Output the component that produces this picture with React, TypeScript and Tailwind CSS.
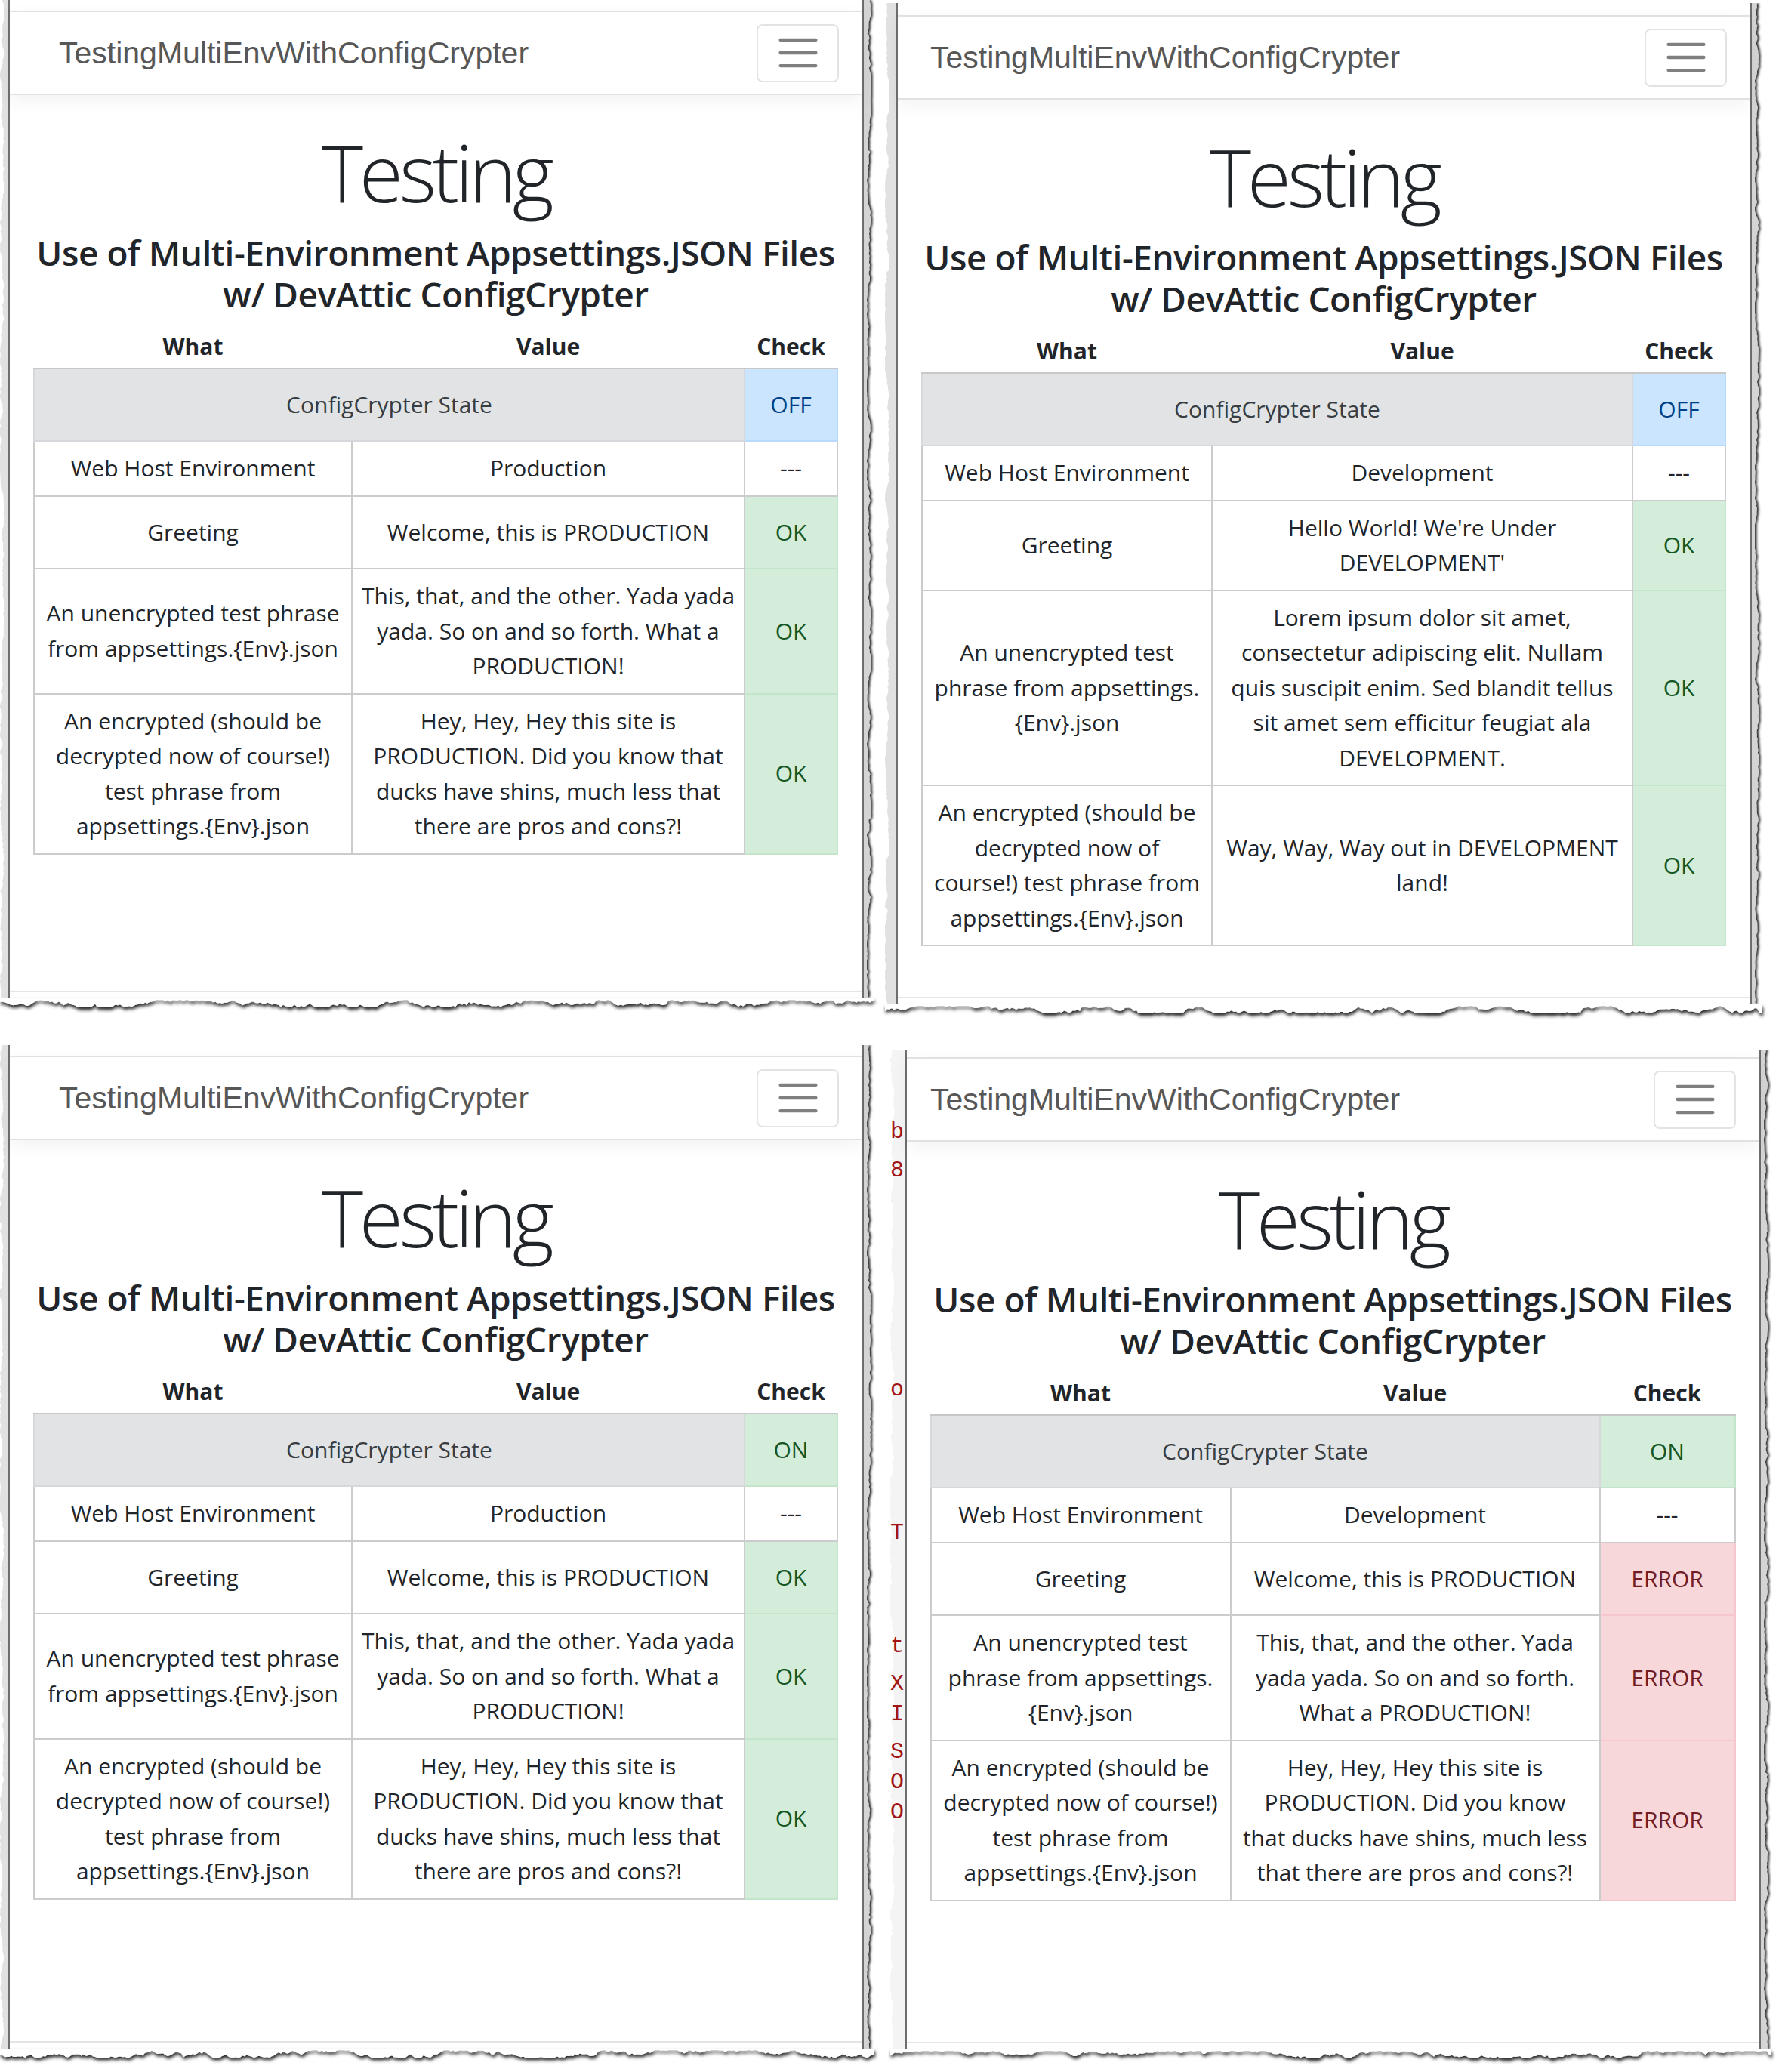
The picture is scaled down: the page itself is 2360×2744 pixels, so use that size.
import React from 'react';
import clsx from 'clsx';

type Check = 'OK' | 'ERROR' | '---';

interface Row {
  what: string[];
  value: string[];
  check: Check;
}

interface Shot {
  id: string;
  state: 'ON' | 'OFF';
  rows: Row[];
  cols: [string, string, string];
  brandPad: string;
  topPad: string;
  height: number;
  heightClass: string;
  wrap: string;
  leftW: number;
  seed: number;
  letters?: boolean;
}

const prodRows: Row[] = [
  { what: ['Web Host Environment'], value: ['Production'], check: '---' },
  { what: ['Greeting'], value: ['Welcome, this is PRODUCTION'], check: 'OK' },
  {
    what: ['An unencrypted test phrase', 'from appsettings.{Env}.json'],
    value: ['This, that, and the other. Yada yada', 'yada. So on and so forth. What a', 'PRODUCTION!'],
    check: 'OK',
  },
  {
    what: ['An encrypted (should be', 'decrypted now of course!)', 'test phrase from', 'appsettings.{Env}.json'],
    value: ['Hey, Hey, Hey this site is', 'PRODUCTION. Did you know that', 'ducks have shins, much less that', 'there are pros and cons?!'],
    check: 'OK',
  },
];

const devRows: Row[] = [
  { what: ['Web Host Environment'], value: ['Development'], check: '---' },
  { what: ['Greeting'], value: ["Hello World! We're Under", "DEVELOPMENT'"], check: 'OK' },
  {
    what: ['An unencrypted test', 'phrase from appsettings.', '{Env}.json'],
    value: [
      'Lorem ipsum dolor sit amet,',
      'consectetur adipiscing elit. Nullam',
      'quis suscipit enim. Sed blandit tellus',
      'sit amet sem efficitur feugiat ala',
      'DEVELOPMENT.',
    ],
    check: 'OK',
  },
  {
    what: ['An encrypted (should be', 'decrypted now of', 'course!) test phrase from', 'appsettings.{Env}.json'],
    value: ['Way, Way, Way out in DEVELOPMENT', 'land!'],
    check: 'OK',
  },
];

// dev host but the encrypted file still says production -> everything fails
const mixedRows: Row[] = [
  { what: ['Web Host Environment'], value: ['Development'], check: '---' },
  { what: ['Greeting'], value: ['Welcome, this is PRODUCTION'], check: 'ERROR' },
  {
    what: ['An unencrypted test', 'phrase from appsettings.', '{Env}.json'],
    value: ['This, that, and the other. Yada', 'yada yada. So on and so forth.', 'What a PRODUCTION!'],
    check: 'ERROR',
  },
  {
    what: ['An encrypted (should be', 'decrypted now of course!)', 'test phrase from', 'appsettings.{Env}.json'],
    value: ['Hey, Hey, Hey this site is', 'PRODUCTION. Did you know', 'that ducks have shins, much less', 'that there are pros and cons?!'],
    check: 'ERROR',
  },
];

const shots: Shot[] = [
  {
    id: 'a',
    state: 'OFF',
    rows: prodRows,
    cols: ['w-[421px]', 'w-[520px]', 'w-[123px]'],
    brandPad: 'pl-[65px]',
    topPad: 'h-[14px]',
    height: 1322,
    heightClass: 'h-[1322px]',
    wrap: '',
    leftW: 10,
    seed: 11,
  },
  {
    id: 'b',
    state: 'OFF',
    rows: devRows,
    cols: ['w-[384px]', 'w-[557px]', 'w-[123px]'],
    brandPad: 'pl-[43px]',
    topPad: 'h-[16px]',
    height: 1326,
    heightClass: 'h-[1326px]',
    wrap: 'mt-[4px] ml-[14px]',
    leftW: 14,
    seed: 23,
  },
  {
    id: 'c',
    state: 'ON',
    rows: prodRows,
    cols: ['w-[421px]', 'w-[520px]', 'w-[123px]'],
    brandPad: 'pl-[65px]',
    topPad: 'h-[14px]',
    height: 1329,
    heightClass: 'h-[1329px]',
    wrap: '',
    leftW: 10,
    seed: 37,
  },
  {
    id: 'd',
    state: 'ON',
    rows: mixedRows,
    cols: ['w-[397px]', 'w-[489px]', 'w-[179px]'],
    brandPad: 'pl-[31px]',
    topPad: 'h-[10px]',
    height: 1324,
    heightClass: 'h-[1324px]',
    wrap: 'mt-[6px] ml-[21px]',
    leftW: 19,
    seed: 53,
    letters: true,
  },
];

const tone = {
  primary: 'bg-[#cce5ff] text-[#004085] border-[#b8daff]',
  success: 'bg-[#d4edda] text-[#155724] border-[#c3e6cb]',
  danger: 'bg-[#f8d7da] text-[#721c24] border-[#f5c6cb]',
};

function rand(seed: number) {
  let s = seed * 7919 + 17;
  return () => {
    s = (s * 16807) % 2147483647;
    return (s - 1) / 2147483646;
  };
}

// random walk for the torn paper edges
function jagged(length: number, min: number, max: number, seed: number) {
  const r = rand(seed);
  const pts: Array<[number, number]> = [];
  let v = (min + max) / 2;
  for (let t = 0; t <= length + 3; t += 3) {
    v += (r() - 0.5) * (max - min) * 0.5;
    if (r() < 0.06) v += (r() - 0.5) * (max - min);
    v = Math.max(min, Math.min(max, v));
    pts.push([Math.min(t, length), v]);
  }
  return pts;
}

function LeftStrip({ width, height, seed, letters }: { width: number; height: number; seed: number; letters?: boolean }) {
  const pts = jagged(height, 0, 5, seed);
  const d = `M${width} 0 L${width} ${height} ` + pts.reverse().map(([t, v]) => `L${v.toFixed(1)} ${t}`).join(' ') + ' Z';
  return (
    <div className="relative self-stretch">
      <svg className="absolute inset-0 block h-full" width={width} viewBox={`0 0 ${width} ${height}`} preserveAspectRatio="none">
        <path d={d} fill={letters ? '#f4f4f4' : '#e1e1e1'} />
      </svg>
      <div className="relative flex flex-col font-['Liberation_Mono',monospace] text-[30px] leading-[30px] text-[#a31515]" style={{ width }}>
        {letters && (
          <>
            <span className="mt-[94px]">b</span>
            <span className="mt-[21px]">8</span>
            <span className="mt-[260px]">o</span>
            <span className="mt-[160px]">T</span>
            <span className="mt-[120px]">t</span>
            <span className="mt-[20px]">X</span>
            <span className="mt-[10px]">I</span>
            <span className="mt-[20px]">S</span>
            <span className="mt-[10px]">O</span>
            <span className="mt-[10px]">O</span>
          </>
        )}
      </div>
    </div>
  );
}

function RightStrip({ height, seed, id }: { height: number; seed: number; id: string }) {
  const pts = jagged(height, 4, 9, seed + 3);
  const d = 'M0 0 ' + pts.map(([t, v]) => `L${v.toFixed(1)} ${t}`).join(' ') + ` L0 ${height} Z`;
  return (
    <svg className="block self-stretch overflow-visible" width="14" viewBox={`0 0 14 ${height}`} preserveAspectRatio="none">
      <defs>
        <filter id={`rs-${id}`} x="-50%" y="0" width="250%" height="100%">
          <feDropShadow dx="2.5" dy="0" stdDeviation="1.5" floodColor="#000" floodOpacity="0.85" />
        </filter>
      </defs>
      <path d={d} fill="#d4d4d4" filter={`url(#rs-${id})`} />
    </svg>
  );
}

function TornBottom({ width, seed, id }: { width: number; seed: number; id: string }) {
  const pts = jagged(width, 2, 12, seed + 7);
  const d = `M0 0 L${width} 0 ` + pts.reverse().map(([t, v]) => `L${t} ${v.toFixed(1)}`).join(' ') + ' Z';
  return (
    <svg className="block overflow-visible" width={width} height="24" viewBox={`0 0 ${width} 24`}>
      <defs>
        <filter id={`tb-${id}`} x="-2%" y="-50%" width="104%" height="300%">
          <feDropShadow dx="1" dy="3.5" stdDeviation="2" floodColor="#000" floodOpacity="0.85" />
        </filter>
      </defs>
      <path d={d} fill="#ffffff" filter={`url(#tb-${id})`} />
    </svg>
  );
}

function Navbar({ brandPad }: { brandPad: string }) {
  return (
    <nav className="relative flex h-[112px] items-center justify-between border-y-2 border-[#dfe1e4] pr-[30px] shadow-[0_8px_22px_rgba(0,0,0,0.05)]">
      <span className={clsx("font-['Liberation_Sans',Arial,sans-serif] text-[41px] leading-none text-[#575757]", brandPad)}>
        TestingMultiEnvWithConfigCrypter
      </span>
      <button
        type="button"
        className="flex h-[77px] w-[109px] items-center justify-center rounded-[8px] border-2 border-[#e3e3e3]"
      >
        <svg width="64" height="64" viewBox="0 0 30 30">
          <path
            d="M4 7h22M4 15h22M4 23h22"
            stroke="rgba(0,0,0,0.5)"
            strokeWidth="2"
            strokeLinecap="round"
            strokeMiterlimit="10"
          />
        </svg>
      </button>
    </nav>
  );
}

function CheckTable({ shot }: { shot: Shot }) {
  const stateTone = shot.state === 'ON' ? tone.success : tone.primary;
  return (
    <table className="mx-auto mt-[19px] w-[1064px] table-fixed border-collapse text-center text-[30px] leading-[46.5px] text-[#212529]">
      <colgroup>
        <col className={shot.cols[0]} />
        <col className={shot.cols[1]} />
        <col className={shot.cols[2]} />
      </colgroup>
      <thead>
        <tr className="font-bold">
          <th className="border-b-2 border-[#c8c8c8] pb-[4px]">What</th>
          <th className="border-b-2 border-[#c8c8c8] pb-[4px]">Value</th>
          <th className="border-b-2 border-[#c8c8c8] pb-[4px]">Check</th>
        </tr>
      </thead>
      <tbody>
        <tr>
          <td colSpan={2} className="border-2 border-[#d6d8db] bg-[#e2e3e5] py-[24px] text-[#383d41]">
            ConfigCrypter State
          </td>
          <td className={clsx('border-2 py-[24px]', stateTone)}>{shot.state}</td>
        </tr>
        {shot.rows.map((row, i) => (
          <tr key={i}>
            <td className="whitespace-nowrap border-2 border-[#cccccc] py-[12px]">
              {row.what.map((line, j) => (
                <div key={j}>{line}</div>
              ))}
            </td>
            <td className="whitespace-nowrap border-2 border-[#cccccc] py-[12px]">
              {row.value.map((line, j) => (
                <div key={j}>{line}</div>
              ))}
            </td>
            {row.check === '---' ? (
              <td className="border-2 border-[#cccccc] py-[12px]">---</td>
            ) : (
              <td className={clsx('border-2 py-[24px]', row.check === 'OK' ? tone.success : tone.danger)}>{row.check}</td>
            )}
          </tr>
        ))}
      </tbody>
    </table>
  );
}

function Screenshot({ shot }: { shot: Shot }) {
  const total = shot.leftW + 1134 + 14;
  return (
    <div className={clsx('flex flex-col', shot.wrap)}>
      <div className="flex">
        <LeftStrip width={shot.leftW} height={shot.height} seed={shot.seed} letters={shot.letters} />
        <div className={clsx('flex w-[1134px] flex-col border-x-[3px] border-[#6e6e6e] bg-white', shot.heightClass)}>
          <div className={shot.topPad} />
          <Navbar brandPad={shot.brandPad} />
          <main className="font-['Open_Sans','Noto_Sans',sans-serif]">
            <h1 className="mt-[47px] text-center text-[106px] font-light leading-[108px] tracking-[-0.05em] text-[#212529]">
              Testing
            </h1>
            <h2 className="mt-[26px] text-center text-[46px] font-semibold leading-[55px] tracking-[-0.01em] text-[#212529]">
              <span className="block">Use of Multi-Environment Appsettings.JSON Files</span>
              <span className="block">w/ DevAttic ConfigCrypter</span>
            </h2>
            <CheckTable shot={shot} />
          </main>
          <div className="flex-1" />
          <div className="h-[10px] border-t-2 border-[#e3e5e8]" />
        </div>
        <RightStrip height={shot.height} seed={shot.seed} id={shot.id} />
      </div>
      <TornBottom width={total} seed={shot.seed} id={shot.id} />
    </div>
  );
}

export default function App() {
  return (
    <div className="flex h-[2744px] w-[2360px] flex-col overflow-hidden bg-white">
      <div className="flex items-start">
        <Screenshot shot={shots[0]} />
        <Screenshot shot={shots[1]} />
      </div>
      <div className="mt-[30px] flex items-start">
        <Screenshot shot={shots[2]} />
        <Screenshot shot={shots[3]} />
      </div>
    </div>
  );
}
